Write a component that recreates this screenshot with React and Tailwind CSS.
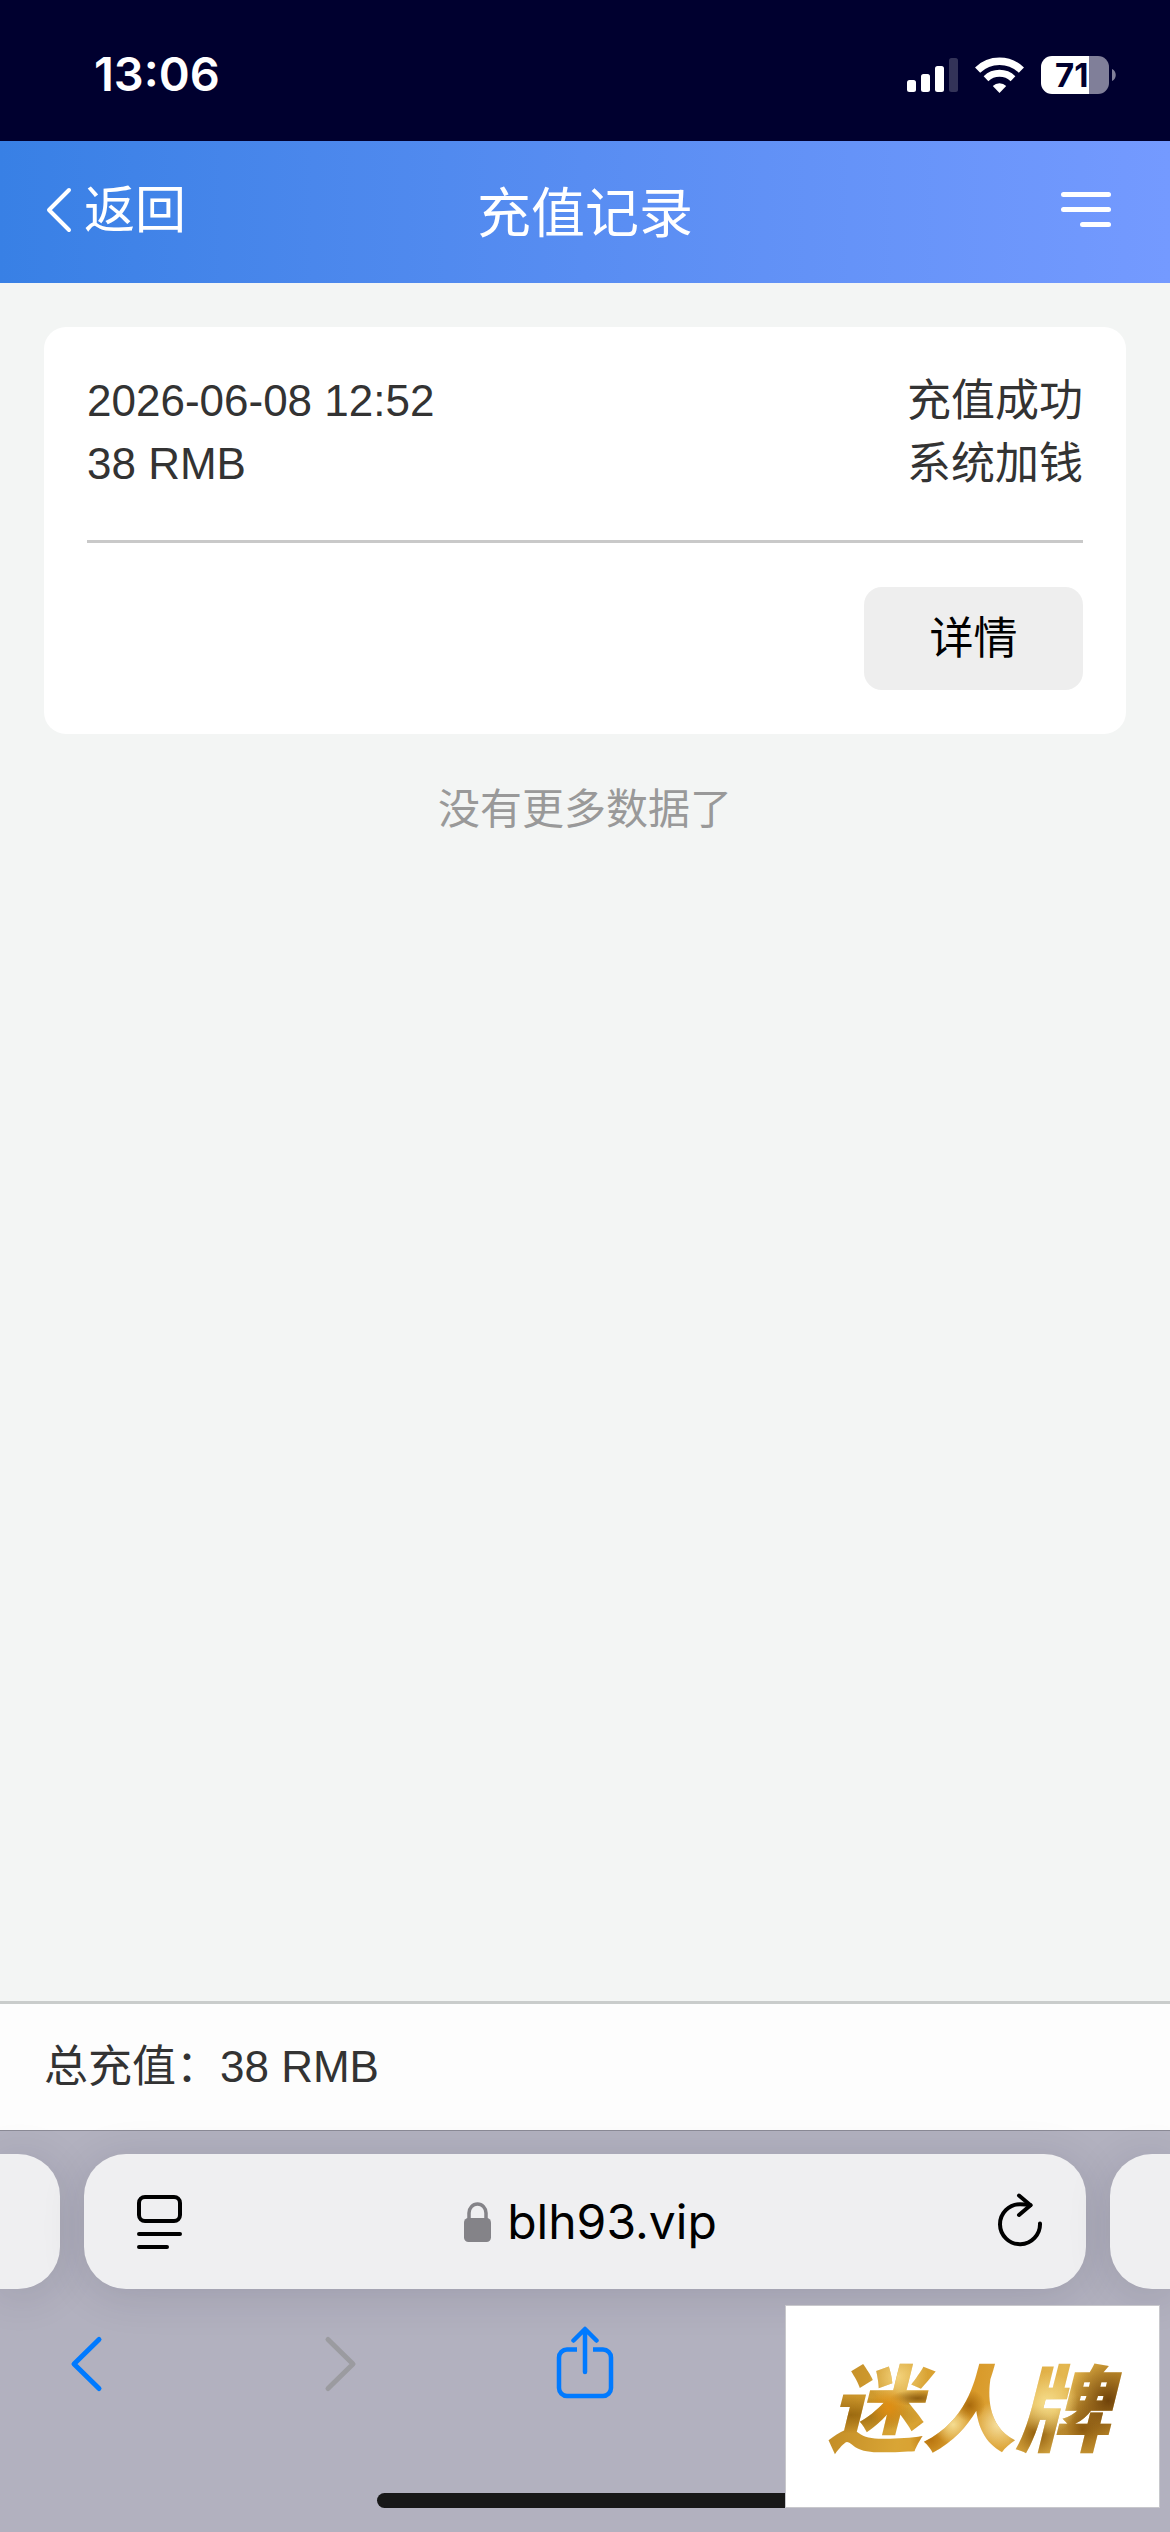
import React from "react";

const UI_FONT = "font-['Liberation_Sans','Noto_Sans_CJK_SC',sans-serif]";

function SignalIcon() {
  return (
    <svg width="51" height="34" viewBox="0 0 51 34" fill="white" aria-hidden="true">
      <rect x="0" y="22" width="9" height="12" rx="2.5" />
      <rect x="14" y="16" width="9" height="18" rx="2.5" />
      <rect x="28" y="8" width="9" height="26" rx="2.5" />
      <rect x="42" y="0" width="9" height="34" rx="2.5" opacity="0.2" />
    </svg>
  );
}

function WifiIcon() {
  return (
    <svg width="49" height="36" viewBox="0 0 49 36" fill="none" stroke="white" aria-hidden="true">
      <path d="M2.6 13.1a31.5 31.5 0 0 1 43.8 0" strokeWidth="7.4" />
      <path d="M11 21.7a19.5 19.5 0 0 1 27 0" strokeWidth="6.8" />
      <path d="M24.500 36 17.800 28.900a9.700 9.700 0 0 1 13.400 0Z" fill="white" stroke="none" />
    </svg>
  );
}

function BatteryIcon() {
  return (
    <svg width="75" height="38" viewBox="0 0 75 38" className="overflow-visible" role="img" aria-label="71%">
      <path d="M48 0h9a11 11 0 0 1 11 11v16a11 11 0 0 1-11 11h-9Z" fill="#807f99" />
      <path d="M48 0H11A11 11 0 0 0 0 11v16a11 11 0 0 0 11 11h37Z" fill="white" />
      <path d="M71 13c5 2 5 10 0 12Z" fill="#807f99" />
      <text x="14" y="31" fill="#00002f" fontSize="33" fontWeight="700" className="font-['Inter',sans-serif]">
        71
      </text>
    </svg>
  );
}

function StatusBar() {
  return (
    <div className="flex h-[141px] items-center justify-between bg-[#00002f] pt-2 pr-[54px] pl-[94px]">
      <time className="font-['Inter',sans-serif] text-[47px] font-semibold text-white">13:06</time>
      <div className="flex items-center gap-[17px]">
        <SignalIcon />
        <WifiIcon />
        <BatteryIcon />
      </div>
    </div>
  );
}

function PageHeader() {
  return (
    <header className="grid h-[142px] grid-cols-[1fr_auto_1fr] items-center bg-linear-to-r from-[#3880e5] to-[#749aff] px-11 pb-1 text-white">
      <button type="button" className="flex items-center gap-3 justify-self-start text-[51px] leading-none">
        <svg width="28" height="46" viewBox="0 0 28 46" fill="none" stroke="currentColor" strokeWidth="4" strokeLinecap="round" strokeLinejoin="round" aria-hidden="true">
          <path d="M25 3 5 23l20 20" />
        </svg>
        返回
      </button>
      <h1 className="pt-2 text-[54px] leading-none">充值记录</h1>
      <button type="button" aria-label="菜单" className="justify-self-end pr-[15px]">
        <svg width="50" height="36" viewBox="0 0 50 36" fill="currentColor" aria-hidden="true">
          <rect width="50" height="5" rx="2.500" />
          <rect y="15" width="50" height="5" rx="2.500" />
          <rect x="19" y="30" width="31" height="5" rx="2.500" />
        </svg>
      </button>
    </header>
  );
}

function RecordCard({ time, amount, status, source }) {
  return (
    <article className="rounded-[22px] bg-white px-[43px] pt-[42px] pb-11">
      <div className="flex justify-between border-b-3 border-[#c9c9c9] pb-[45px] text-[44px] leading-[63px] text-[#333]">
        <div>
          <p>{time}</p>
          <p>{amount}</p>
        </div>
        <div className="text-right">
          <p>{status}</p>
          <p>{source}</p>
        </div>
      </div>
      <div className="flex justify-end pt-11">
        <button type="button" className="h-[103px] w-[219px] rounded-[18px] bg-[#eee] text-[44px] leading-none text-black">
          详情
        </button>
      </div>
    </article>
  );
}

function AddressBar() {
  return (
    <div className="flex h-[135px] gap-6">
      <div className="w-[60px] rounded-r-[42px] bg-[#efeff1] shadow-[0_6px_44px_rgba(20,20,45,0.13)]" />
      <div className="grid flex-1 grid-cols-[1fr_auto_1fr] items-center rounded-[42px] bg-[#efeff1] pr-[42px] pl-[53px] shadow-[0_6px_44px_rgba(20,20,45,0.13)]">
        <button type="button" aria-label="页面设置" className="justify-self-start">
          <svg width="46" height="54" viewBox="0 0 46 54" fill="none" stroke="black" strokeWidth="4" strokeLinecap="round" aria-hidden="true">
            <rect x="2" y="2" width="41" height="24" rx="6" />
            <path d="M2 39h41M2 52h28" />
          </svg>
        </button>
        <a href="#address" className="flex items-center gap-4 font-['Inter',sans-serif] text-[48px] leading-none text-black">
          <svg width="27" height="40" viewBox="0 0 27 40" aria-hidden="true">
            <rect y="16" width="27" height="24" rx="4.500" fill="#848388" />
            <path d="M5 18v-7a8.500 9 0 0 1 17 0v7" fill="none" stroke="#848388" strokeWidth="3.500" />
          </svg>
          blh93.vip
        </a>
        <button type="button" aria-label="刷新" className="justify-self-end">
          <svg width="48" height="58" viewBox="0 0 48 58" fill="none" stroke="black" strokeWidth="4" strokeLinecap="round" strokeLinejoin="round" aria-hidden="true">
            <path d="M44 30.500a20 20 0 1 1-20-19.300c4 0 7 .3 10.500 1" />
            <path d="m23 2.500 11.500 9.700L23 22" />
          </svg>
        </button>
      </div>
      <div className="w-[60px] rounded-l-[42px] bg-[#efeff1] shadow-[0_6px_44px_rgba(20,20,45,0.13)]" />
    </div>
  );
}

function Toolbar() {
  return (
    <div className="flex items-center justify-between px-[55px]">
      <button type="button" aria-label="后退" className="text-[#007aff]">
        <svg width="64" height="76" viewBox="0 0 64 76" fill="none" stroke="currentColor" strokeWidth="5" strokeLinecap="round" strokeLinejoin="round" aria-hidden="true">
          <path d="M44 13.500 19 38l25 24.500" />
        </svg>
      </button>
      <button type="button" aria-label="前进" disabled className="text-[#9b9ba0]">
        <svg width="64" height="76" viewBox="0 0 64 76" fill="none" stroke="currentColor" strokeWidth="5" strokeLinecap="round" strokeLinejoin="round" aria-hidden="true">
          <path d="M24 13.500 49 38 24 62.500" />
        </svg>
      </button>
      <button type="button" aria-label="分享" className="text-[#007aff]">
        <svg width="64" height="76" viewBox="0 0 64 76" fill="none" stroke="currentColor" strokeWidth="4.500" aria-hidden="true">
          <path d="M24 23.500H14a8 8 0 0 0-8 8V62a8 8 0 0 0 8 8h36a8 8 0 0 0 8-8V31.500a8 8 0 0 0-8-8H40" />
          <path d="M32 46V4M20.500 14.500 32 3l11.500 11.500" strokeLinecap="round" strokeLinejoin="round" />
        </svg>
      </button>
      <span className="w-16" />
      <span className="w-16" />
    </div>
  );
}

function BrandBadge() {
  return (
    <div className="absolute right-[10px] bottom-6 flex h-[203px] w-[375px] items-center justify-center border border-[#c8c8cc] bg-white pb-2">
      <span className="bg-[radial-gradient(circle_at_24%_54%,#e08d12_0%,transparent_8%),radial-gradient(ellipse_at_12%_60%,#9c6a10_0%,transparent_18%),radial-gradient(ellipse_at_33%_46%,#8f5f12_0%,transparent_9%),radial-gradient(circle_at_27%_28%,#f3d27c_0%,transparent_12%),radial-gradient(circle_at_49%_52%,#a8690c_0%,transparent_9%),radial-gradient(circle_at_44%_68%,#f4dc92_0%,transparent_10%),radial-gradient(circle_at_58%_68%,#f6e0a0_0%,transparent_12%),radial-gradient(circle_at_37%_80%,#b8730e_0%,transparent_9%),radial-gradient(circle_at_73%_50%,#f5dd8c_0%,transparent_13%),radial-gradient(circle_at_70%_76%,#8f5c0c_0%,transparent_12%),radial-gradient(circle_at_92%_48%,#6f420a_0%,transparent_14%),radial-gradient(circle_at_84%_72%,#8f5c10_0%,transparent_12%),linear-gradient(100deg,#b98220,#d9a535_30%,#d99a2a_50%,#e4b750_75%,#c58b20)] bg-clip-text pr-6 pl-4 font-['Noto_Sans_CJK_SC',sans-serif] text-[94px] leading-[120px] font-black text-transparent italic">
        迷人牌
      </span>
    </div>
  );
}

export default function App() {
  return (
    <div className={`relative flex min-h-screen flex-col bg-[#f3f5f4] ${UI_FONT}`}>
      <StatusBar />
      <PageHeader />
      <main className="flex-1 px-11 pt-11">
        <RecordCard time="2026-06-08 12:52" amount="38 RMB" status="充值成功" source="系统加钱" />
        <p className="pt-11 text-center text-[42px] leading-[63px] text-[#999]">没有更多数据了</p>
      </main>
      <div className="border-t-3 border-[#c9cccb] bg-[#fdfdfd] px-11 py-8 text-[44px] leading-[62px] text-[#333]">
        总充值：38 RMB
      </div>
      <nav className="flex h-[402px] flex-col border-t border-[#8b8a96] bg-[#b2b1bf] pt-[23px]">
        <AddressBar />
        <div className="pt-[37px]">
          <Toolbar />
        </div>
        <div className="mt-auto mb-6 h-[15px] w-[416px] self-center rounded-full bg-[#181818]" />
      </nav>
      <BrandBadge />
    </div>
  );
}
